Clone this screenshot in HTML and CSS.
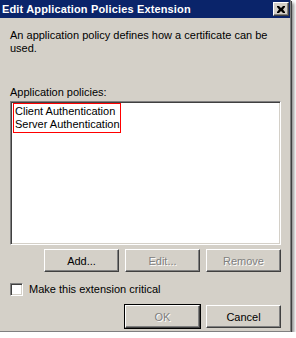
FILE: index.html
```html
<!DOCTYPE html>
<html lang="en">
<head>
    <meta charset="UTF-8">
    <title>Edit Application Policies Extension</title>
    <link rel="stylesheet" href="styles.css">
</head>
<body>
    <div class="window">
        <div class="titlebar">
            <span class="title">Edit Application Policies Extension</span>
            <span class="close-btn">
                <svg width="8" height="7" viewBox="0 0 8 7">
                    <path d="M0 0h2l2 2 2-2h2v1l-2 2.5 2 2.5v1h-2l-2-2-2 2h-2v-1l2-2.5-2-2.5z" fill="#000"/>
                </svg>
            </span>
        </div>

        <div class="content">
            <p class="desc">An application policy defines how a certificate can be used.</p>

            <div class="list-label">Application policies:</div>
            <div class="listbox">
                <div class="highlight">
                    <div>Client Authentication</div>
                    <div>Server Authentication</div>
                </div>
            </div>

            <div class="btn-row">
                <button class="btn">Add...</button>
                <button class="btn" disabled>Edit...</button>
                <button class="btn" disabled>Remove</button>
            </div>

            <label class="check-row">
                <span class="checkbox"></span>
                <span>Make this extension critical</span>
            </label>

            <div class="btn-row bottom-row">
                <button class="btn default-btn" disabled>OK</button>
                <button class="btn">Cancel</button>
            </div>
        </div>
    </div>
</body>
</html>
```

FILE: styles.css
```css
body {
    margin: 0;
    background-color: #ffffff;
    font-family: "Liberation Sans", Arial, sans-serif;
    font-size: 11px;
    color: #000;
}

.window {
    width: 290px;
    height: 331px;
    background-color: #d4d0c8;
    border-right: 1px solid #808080;
    border-bottom: 1px solid #808080;
    box-shadow: 1px 1px 0 #404040, 3px 3px 3px rgba(0, 0, 0, 0.45);
}

.titlebar {
    height: 18px;
    background-color: #0a246a;
    display: flex;
    justify-content: space-between;
    align-items: center;
    padding: 0 1px 0 2px;
}

.title {
    color: white;
    font-weight: bold;
    font-size: 11px;
    letter-spacing: 0.15px;
}

.close-btn {
    width: 14px;
    height: 12px;
    background-color: #d4d0c8;
    border: 1px solid;
    border-color: #fff #404040 #404040 #fff;
    box-shadow: inset -1px -1px #808080;
    display: flex;
    align-items: center;
    justify-content: center;
}

.content {
    padding: 11px 0 0 10px;
}

.desc {
    margin: 0;
    width: 262px;
    line-height: 13px;
}

.list-label {
    margin-top: 31px;
    line-height: 13px;
}

.listbox {
    margin-top: 2px;
    width: 267px;
    height: 141px;
    background-color: white;
    border: 1px solid;
    border-color: #808080 #fff #fff #808080;
    box-shadow: inset 1px 1px #404040, inset -1px -1px #d4d0c8;
    padding: 1px 0 0 2px;
}

.highlight {
    display: inline-block;
    border: 1px solid #ff0000;
    padding: 1px 0 1px 1px;
    line-height: 13px;
}

.btn-row {
    display: flex;
    justify-content: flex-end;
    gap: 6px;
    width: 271px;
    margin-top: 4px;
}

.btn {
    width: 75px;
    height: 23px;
    background-color: #d4d0c8;
    border: 1px solid;
    border-color: #fff #404040 #404040 #fff;
    box-shadow: inset -1px -1px #808080;
    font-family: "Liberation Sans", Arial, sans-serif;
    font-size: 11px;
    color: #000;
    padding: 0;
}

.btn:disabled {
    color: #808080;
    text-shadow: 1px 1px 0 #fff;
}

.default-btn {
    outline: 1px solid #000;
    outline-offset: 0;
}

.check-row {
    display: flex;
    align-items: center;
    gap: 6px;
    margin-top: 11px;
    line-height: 13px;
}

.checkbox {
    width: 11px;
    height: 11px;
    background-color: white;
    border: 1px solid;
    border-color: #808080 #fff #fff #808080;
    box-shadow: inset 1px 1px #404040, inset -1px -1px #d4d0c8;
}

.bottom-row {
    margin-top: 9px;
}
```
